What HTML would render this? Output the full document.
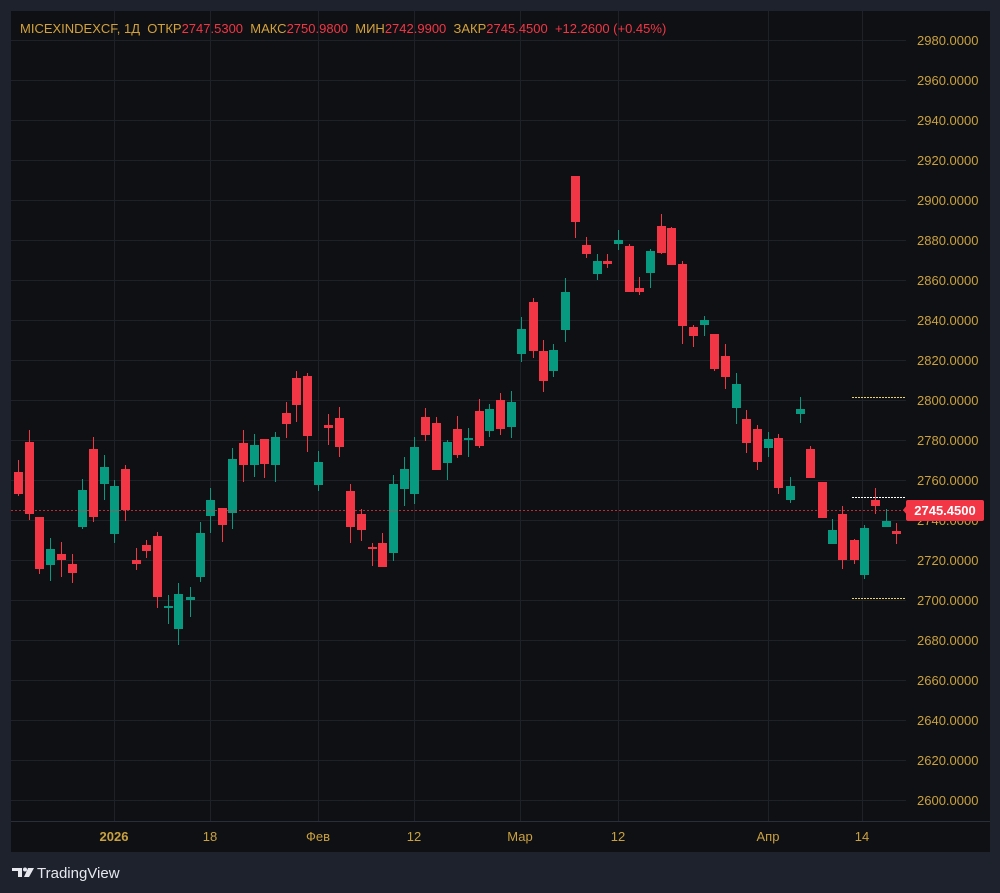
<!DOCTYPE html>
<html><head><meta charset="utf-8"><style>
html,body{margin:0;padding:0;background:#1e222d;width:1000px;height:893px;overflow:hidden;font-family:"Liberation Sans",sans-serif}
#c{position:absolute;left:0;top:0}
</style></head><body>
<svg id="c" width="1000" height="893" xmlns="http://www.w3.org/2000/svg">
<rect x="0" y="0" width="1000" height="893" fill="#1e222d"/>
<rect x="11" y="11" width="979" height="841" fill="#0f1014"/>
<line x1="11" y1="821.5" x2="990" y2="821.5" stroke="#2a2e39"/>
<g id="grid" stroke="#1e2128" stroke-width="1"></g>
<g id="candles"></g>
<line x1="11" y1="510.5" x2="906" y2="510.5" stroke="#f23645" stroke-dasharray="2,2" opacity="0.75"/>
<line x1="852" y1="397.5" x2="906" y2="397.5" stroke="#e8d070" stroke-dasharray="2,1"/>
<line x1="852" y1="598.5" x2="906" y2="598.5" stroke="#e8d070" stroke-dasharray="2,1"/>
<line x1="852" y1="497.5" x2="906" y2="497.5" stroke="#ffffff" stroke-dasharray="2,1"/>
<g id="labels" font-size="13" fill="#c9a13f" font-family="Liberation Sans, sans-serif"></g>
<rect x="906" y="500" width="78" height="21" rx="2" fill="#f23645"/>
<polygon points="903,510 907,505 907,515" fill="#f23645"/>
<text x="945" y="515" font-size="13" font-weight="bold" fill="#fff" text-anchor="middle">2745.4500</text>
<g font-size="13" fill="#c9a13f" text-anchor="middle">
<text x="114" y="841" font-weight="bold">2026</text>
<text x="210" y="841">18</text>
<text x="318" y="841">Фев</text>
<text x="414" y="841">12</text>
<text x="520" y="841">Мар</text>
<text x="618" y="841">12</text>
<text x="768" y="841">Апр</text>
<text x="862" y="841">14</text>
</g>
<text x="20" y="33" font-size="13" fill="#d4a23a" xml:space="preserve" style="white-space:pre">MICEXINDEXCF, 1Д  ОТКР<tspan fill="#f23645">2747.5300</tspan>  МАКС<tspan fill="#f23645">2750.9800</tspan>  МИН<tspan fill="#f23645">2742.9900</tspan>  ЗАКР<tspan fill="#f23645">2745.4500</tspan>  <tspan fill="#f23645">+12.2600 (+0.45%)</tspan></text>
<g fill="#e6e8ee">
<path d="M12 868h10v9h-4v-6h-6z"/>
<circle cx="25" cy="869.5" r="2"/>
<path d="M28 868h6l-5 9h-5z"/>
</g>
<text x="37" y="878" font-size="15" fill="#e6e8ee">TradingView</text>
</svg>
<script>
var ns="http://www.w3.org/2000/svg";
function el(p,t,a){var e=document.createElementNS(ns,t);for(var k in a)e.setAttribute(k,a[k]);p.appendChild(e);return e;}
var g=document.getElementById('grid');
[114,210,318,414,520,618,768,862].forEach(function(x){el(g,'line',{x1:x+.5,y1:11,x2:x+.5,y2:821});});
var L=document.getElementById('labels');
for(var i=0;i<20;i++){var y=40+i*40;el(g,'line',{x1:11,y1:y+.5,x2:906,y2:y+.5});
 var t=el(L,'text',{x:917,y:y+5});t.textContent=(2980-i*20)+'.0000';}
var R='#f23645',G='#089981';
var d=[
[18,472,494,460,496,R],[29,442,514,430,520,R],[39,517,569,517,574,R],[50,549,565,538,581,G],[61,554,560,542,577,R],[72,564,573,554,583,R],
[82,490,527,479,529,G],[93,449,517,437,522,R],[104,467,484,455,500,G],[114,486,534,480,543,G],[125,469,510,465,521,R],
[136,560,564,548,570,R],[146,545,551,540,558,R],[157,536,597,532,608,R],[168,606,608,595,624,G],[178,594,629,583,645,G],
[190,597,600,587,617,G],[200,533,577,522,582,G],[210,500,516,488,533,G],[222,508,525,508,542,R],[232,459,513,448,529,G],
[243,443,465,430,482,R],[254,445,465,434,477,G],[264,439,464,439,478,R],[275,437,465,432,482,G],[286,413,424,402,438,R],
[296,378,405,371,422,R],[307,376,436,373,452,R],[318,462,485,451,491,G],[328,425,428,414,445,R],[339,418,447,407,457,R],
[350,491,527,484,543,R],[361,514,530,509,541,R],[372,547,549,543,566,R],[382,543,567,533,567,R],[393,484,553,475,561,G],
[404,469,489,457,506,G],[414,447,494,437,504,G],[425,417,435,408,441,R],[436,423,470,417,470,R],[447,442,463,440,480,G],
[457,429,455,416,458,R],[468,438,440,428,457,G],[479,411,446,399,448,R],[489,409,431,404,437,G],[500,400,429,393,435,R],
[511,402,427,391,438,G],[521,329,354,317,362,G],[533,302,351,298,358,R],[543,351,381,340,392,R],[553,350,371,344,377,G],
[565,292,330,278,342,G],[575,176,222,176,238,R],[586,245,254,237,258,R],[597,261,274,254,280,G],[607,261,264,254,268,R],
[618,240,244,230,250,G],[629,246,292,244,292,R],[639,288,292,277,295,R],[650,251,273,249,288,G],[661,226,253,214,254,R],
[671,228,265,227,265,R],[682,264,326,261,344,R],[693,327,336,325,347,R],[704,320,325,316,336,G],[714,334,369,334,371,R],
[725,356,377,344,389,R],[736,384,408,373,424,G],[746,419,443,410,453,R],[757,429,462,425,470,R],[768,439,448,432,457,G],
[778,438,488,434,494,R],[790,486,500,477,503,G],[800,409,414,397,423,G],[810,449,478,446,478,R],[822,482,518,482,518,R],
[832,530,544,519,544,G],[842,514,560,506,569,R],[854,540,560,539,564,R],[864,528,575,525,579,G],[875,500,506,488,514,R],
[886,521,527,509,527,G],[896,531,534,523,544,R]];
var C=document.getElementById('candles');
d.forEach(function(c){
 el(C,'line',{x1:c[0]+.5,y1:c[3],x2:c[0]+.5,y2:c[4],stroke:c[5]});
 el(C,'rect',{x:c[0]-4,y:c[1],width:9,height:Math.max(2,c[2]-c[1]),fill:c[5]});
});
</script>
</body></html>
